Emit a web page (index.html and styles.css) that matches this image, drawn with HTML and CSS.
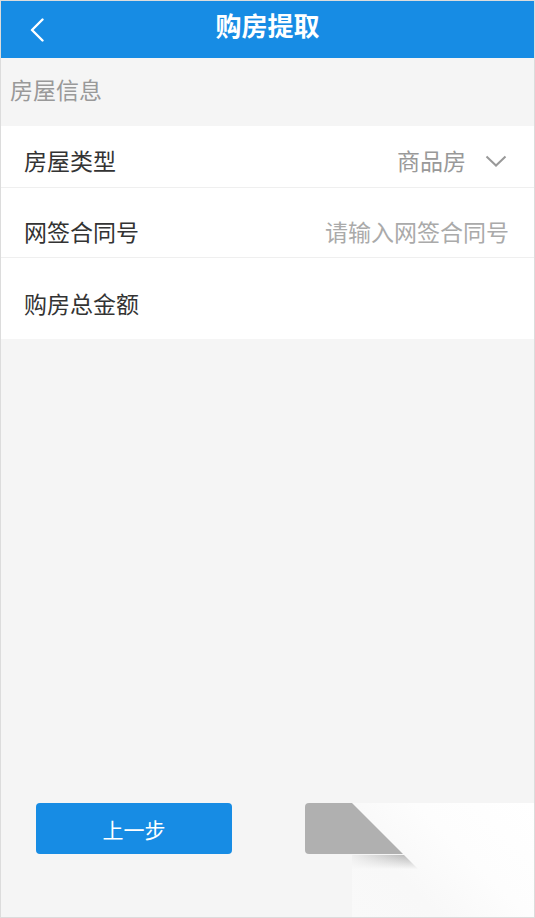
FILE: index.html
```html
<!DOCTYPE html>
<html lang="zh-CN">
<head>
    <meta charset="UTF-8">
    <meta name="viewport" content="width=device-width, initial-scale=1.0">
    <title>购房提取</title>
    <link rel="stylesheet" href="styles.css">
</head>
<body>

    <div class="screen">
        <!-- 顶部导航 -->
        <header class="topbar">
            <a class="back" href="#">
                <svg width="14" height="24" viewBox="0 0 14 24">
                    <path d="M12.5 1.5 L2 12 L12.5 22.5" fill="none" stroke="#fff" stroke-width="2.4" stroke-linecap="round" stroke-linejoin="round"/>
                </svg>
            </a>
            <h1 class="title">购房提取</h1>
            <span></span>
        </header>

        <!-- 房屋信息 -->
        <div class="section-title">房屋信息</div>

        <div class="form">
            <div class="row row-type">
                <span class="label">房屋类型</span>
                <span class="value">
                    商品房
                    <svg class="arrow" width="22" height="12" viewBox="0 0 22 12">
                        <path d="M1.5 1.5 L11 10.5 L20.5 1.5" fill="none" stroke="#999" stroke-width="2"/>
                    </svg>
                </span>
            </div>
            <div class="row row-contract">
                <label class="label" for="contract">网签合同号</label>
                <input id="contract" class="input" type="text" placeholder="请输入网签合同号">
            </div>
            <div class="row row-amount">
                <label class="label" for="amount">购房总金额</label>
                <input id="amount" class="input" type="text">
            </div>
        </div>

        <!-- 底部按钮，下一步被卷页挡住 -->
        <div class="footer">
            <button class="btn btn-prev">上一步</button>
            <button class="btn btn-next" aria-label="下一步"></button>
        </div>

        <!-- 右下角卷页 -->
        <div class="curl-shadow"></div>
        <div class="curl"></div>
    </div>

</body>
</html>
```

FILE: styles.css
```css
/* 基础设置 */
body {
    margin: 0;
    font-family: "Noto Sans CJK SC", "Noto Sans", sans-serif;
}

.screen {
    position: relative;
    width: 535px;
    height: 918px;
    box-sizing: border-box;
    border: 1px solid #dcdcdc;
    background-color: #f5f5f5;
    display: flex;
    flex-direction: column;
    overflow: hidden;
}

/* 顶部导航 */
.topbar {
    height: 57px;
    flex-shrink: 0;
    background-color: #178ce4;
    display: grid;
    grid-template-columns: 1fr auto 1fr;
    align-items: center;
    margin: 0 -1px;
}

.back {
    display: flex;
    padding-left: 30px;
}

.title {
    margin: 0;
    color: #fff;
    font-size: 26px;
    font-weight: bold;
    line-height: 30px;
    margin-top: -10px;
}

/* 分组标题 */
.section-title {
    height: 68px;
    padding-left: 9px;
    padding-bottom: 6px;
    box-sizing: border-box;
    display: flex;
    align-items: center;
    font-size: 23px;
    color: #999;
}

/* 表单行 */
.form {
    background-color: #fff;
}

.row {
    display: flex;
    justify-content: space-between;
    align-items: flex-start;
    box-sizing: border-box;
    padding: 0 25px 0 23px;
    border-bottom: 1px solid #efefef;
    font-size: 23px;
    line-height: 28px;
}

.row-type {
    height: 62px;
    padding-top: 20px;
}

.row-contract {
    height: 70px;
    padding-top: 29px;
}

.row-amount {
    height: 81px;
    padding-top: 31px;
    border-bottom: none;
}

.label {
    color: #333;
    white-space: nowrap;
}

.value {
    display: flex;
    align-items: center;
    color: #999;
    padding-right: 2px;
}

.arrow {
    margin-left: 19px;
    margin-top: 2px;
}

.input {
    flex: 1;
    min-width: 0;
    border: none;
    outline: none;
    padding: 0;
    text-align: right;
    font-family: inherit;
    font-size: 23px;
    line-height: 28px;
    color: #333;
    background: transparent;
}

.input::placeholder {
    color: #aaa;
}

/* 底部按钮 */
.footer {
    margin-top: auto;
    display: flex;
    gap: 73px;
    padding: 0 0 63px 35px;
}

.btn {
    width: 196px;
    height: 51px;
    border: none;
    border-radius: 4px;
    font-family: inherit;
    font-size: 21px;
    color: #fff;
}

.btn-prev {
    background-color: #178ce4;
}

.btn-next {
    background-color: #b0b0b0;
}

/* 卷页效果，盖在右下角 */
.curl {
    position: absolute;
    left: 351px;
    top: 802px;
    right: -1px;
    bottom: -1px;
    background: linear-gradient(225deg, #ffffff 0%, #fdfdfd 40%, #f8f8f8 70%, #f9f9f9 100%);
    clip-path: polygon(0 0, 100% 0, 100% 100%, 0 100%, 0 66px, 66px 66px);
}

/* 卷页下的阴影 */
.curl-shadow {
    position: absolute;
    left: 351px;
    top: 854px;
    width: 66px;
    height: 14px;
    background:
        linear-gradient(to right, rgba(248, 248, 248, 0.85), rgba(248, 248, 248, 0) 85%),
        linear-gradient(to bottom, #b8b8b8, #f8f8f8);
}
```
